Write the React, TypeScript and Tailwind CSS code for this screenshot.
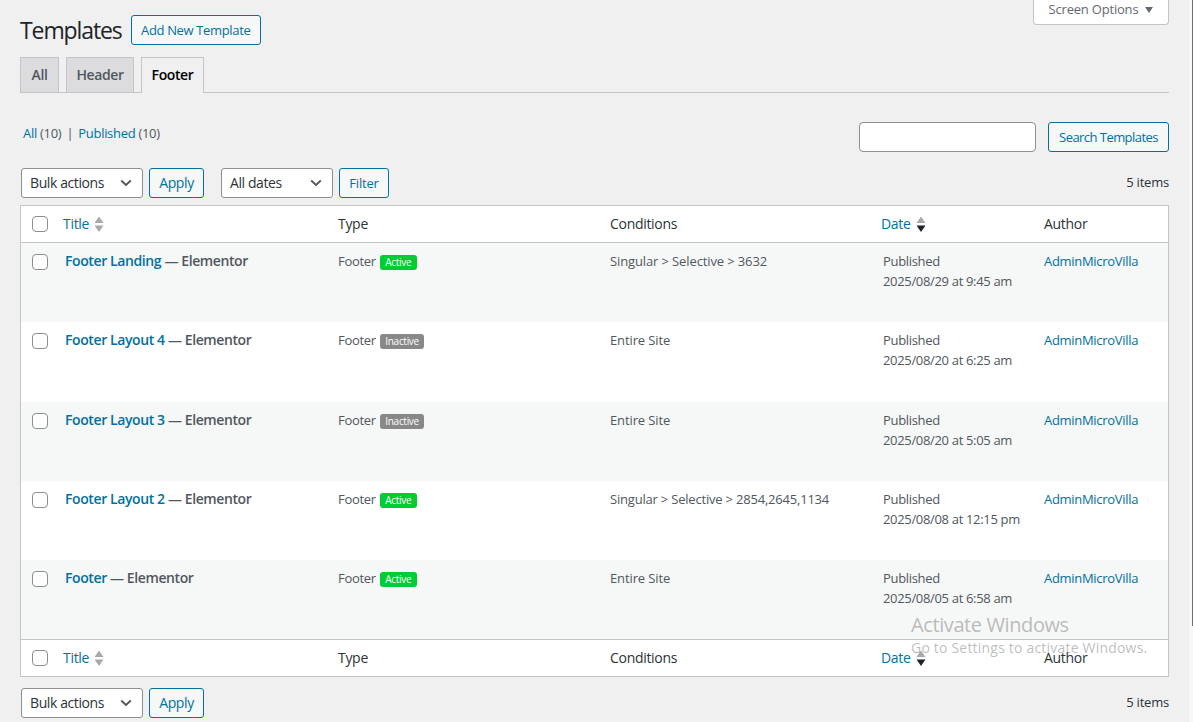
const font = "font-['Open_Sans','Noto_Sans',sans-serif]";

function Sort({ active }: { active?: boolean }) {
  return (
    <svg width="10" height="17" viewBox="0 0 10 17" className="shrink-0">
      <path d="M5 0.5 L9.5 7 H0.5 Z" fill="#a7aaad" />
      <path d="M5 16 L9.5 9.5 H0.5 Z" fill={active ? "#1d2327" : "#a7aaad"} />
    </svg>
  );
}

function Check() {
  return <span className="block w-4 h-4 rounded-[4px] border border-[#8c8f94] bg-white" />;
}

function Chevron() {
  return (
    <svg width="12" height="8" viewBox="0 0 12 8" className="shrink-0">
      <path d="M1.2 1.5 L6 6 L10.8 1.5" fill="none" stroke="#50575e" strokeWidth="1.8" />
    </svg>
  );
}

function Select({ label, w }: { label: string; w: string }) {
  return (
    <div className={`${w} h-[30px] flex items-center justify-between pl-2 pr-2.5 bg-white border border-[#8c8f94] rounded-[3px] text-[14px] tracking-[-0.4px] text-[#2c3338]`}>
      <span className="-mt-px">{label}</span>
      <Chevron />
    </div>
  );
}

function Btn({ label, className = "" }: { label: string; className?: string }) {
  return (
    <div className={`h-[30px] flex items-center justify-center border border-[#0071a1] rounded-[3px] bg-[#f6f7f7] text-[#0071a1] ${className}`}>
      {label}
    </div>
  );
}

const COLS = "grid grid-cols-[317px_272px_271px_163px_1fr]";

function Head() {
  return (
    <div className={`${COLS} h-[36px] items-center bg-white text-[14px] tracking-[-0.3px] text-[#2c3338]`}>
      <div className="flex items-center">
        <span className="w-[42px] pl-[11px]"><Check /></span>
        <span className="-mt-px text-[#0071a1] mr-[5px]">Title</span>
        <Sort />
      </div>
      <span className="-mt-px">Type</span>
      <span className="-mt-px">Conditions</span>
      <div className="flex items-center">
        <span className="-mt-px text-[#0071a1] mr-[5px]">Date</span>
        <Sort active />
      </div>
      <span className="-mt-px">Author</span>
    </div>
  );
}

const rows = [
  { name: "Footer Landing", active: true, cond: "Singular > Selective > 3632", date: "2025/08/29 at 9:45 am", h: "h-[79px]" },
  { name: "Footer Layout 4", active: false, cond: "Entire Site", date: "2025/08/20 at 6:25 am", h: "h-[80px]" },
  { name: "Footer Layout 3", active: false, cond: "Entire Site", date: "2025/08/20 at 5:05 am", h: "h-[79px]" },
  { name: "Footer Layout 2", active: true, cond: "Singular > Selective > 2854,2645,1134", date: "2025/08/08 at 12:15 pm", h: "h-[79px]" },
  { name: "Footer", active: true, cond: "Entire Site", date: "2025/08/05 at 6:58 am", h: "h-[79px]" },
];

export default function App() {
  return (
    <div className={`relative w-[1193px] h-[722px] overflow-hidden bg-[#f0f0f1] text-[13px] text-[#50575e] ${font}`}>
      <div className="absolute right-0 top-0 w-[4px] h-full bg-[#f7f7f7]" />
      <div className="absolute right-0 top-0 w-[1.5px] h-[626px] bg-[#6e6e6e]" />
      <div className="absolute left-[1033px] top-0 w-[136px] h-[25px] bg-white border border-t-0 border-[#c3c4c7] rounded-b-[4px] flex items-center justify-center gap-[7px] text-[13px] tracking-[-0.2px] text-[#646970]">
        <span className="-mt-[5px]">Screen Options</span>
        <span className="-mt-[4px] w-0 h-0 border-x-[4.5px] border-x-transparent border-t-[6px] border-t-[#646970]" />
      </div>

      <div className="pl-5 pr-6 pt-[15px]">
        <div className="flex items-center gap-[9px] h-[30px]">
          <h1 className="text-[23px] tracking-[-1.1px] text-[#1d2327] font-normal">Templates</h1>
          <Btn label="Add New Template" className="w-[130px] text-[13px] tracking-[-0.35px] pt-px" />
        </div>

        <div className="flex items-end gap-[7px] h-[36px] mt-[12px] border-b border-[#c3c4c7]">
          <div className="h-[35px] w-[39px] flex items-center justify-center pb-[2px] bg-[#dcdcde] border border-[#c3c4c7] border-b-0 text-[14px] font-semibold tracking-[-0.4px] text-[#50575e]">All</div>
          <div className="h-[35px] w-[68px] flex items-center justify-center pb-[2px] bg-[#dcdcde] border border-[#c3c4c7] border-b-0 text-[14px] font-semibold tracking-[-0.4px] text-[#50575e]">Header</div>
          <div className="h-[36px] -mb-px w-[63px] flex items-center justify-center pb-[2px] bg-[#f0f0f1] border border-[#c3c4c7] border-b-0 text-[14px] font-semibold tracking-[-0.4px] text-[#000]">Footer</div>
        </div>

        <div className="flex justify-between items-start h-[30px] mt-[29px]">
          <div className="pl-[3px] mt-[2px] text-[13px] tracking-[-0.3px] text-[#50575e]">
            <span className="text-[#0071a1]">All</span> (10) <span className="mx-[2px]">|</span> <span className="text-[#0071a1]">Published</span> (10)
          </div>
          <div className="flex gap-3">
            <div className="w-[177px] h-[30px] bg-white border border-[#8c8f94] rounded-[4px]" />
            <Btn label="Search Templates" className="w-[121px] text-[13px] tracking-[-0.55px] pt-px" />
          </div>
        </div>

        <div className="flex items-center h-[30px] mt-[16px] pl-px">
          <Select label="Bulk actions" w="w-[122px]" />
          <Btn label="Apply" className="w-[55px] ml-[6px] text-[14px] tracking-[-0.4px] pb-[2px]" />
          <Select label="All dates" w="w-[112px] ml-[17px]" />
          <Btn label="Filter" className="w-[50px] ml-[6px] text-[13px] tracking-[-0.2px] pt-px" />
          <span className="ml-auto text-[13px] tracking-[-0.2px] text-[#2c3338]">5 items</span>
        </div>

        <div className="mt-[7px] border border-[#c3c4c7] bg-white">
          <div className="border-b border-[#c3c4c7]"><Head /></div>
          {rows.map((r, i) => (
            <div key={r.name} className={`${COLS} ${r.h} pt-[9px] ${i % 2 === 0 ? "bg-[#f6f7f7]" : "bg-white"}`}>
              <div className="flex">
                <span className="w-[44px] pl-[11px] pt-[2px]"><Check /></span>
                <span className="-mt-[2px] text-[14px] font-semibold tracking-[-0.4px]"><span className="text-[#0071a1]">{r.name}</span> — Elementor</span>
              </div>
              <div className="flex items-start gap-[4px] tracking-[-0.3px]">
                <span>Footer</span>
                <span className={`mt-[3px] h-[15px] px-[5.5px] rounded-[3px] text-[10px] tracking-[-0.3px] leading-[15px] text-white ${r.active ? "bg-[#00cc33]" : "bg-[#888888]"}`}>{r.active ? "Active" : "Inactive"}</span>
              </div>
              <span className={r.cond.length > 30 ? "tracking-[-0.2px]" : "tracking-[-0.12px]"}>{r.cond}</span>
              <div className="leading-[19.5px] pl-[2px] tracking-[-0.33px]">Published<br />{r.date}</div>
              <span className="text-[#0071a1] tracking-[-0.3px]">AdminMicroVilla</span>
            </div>
          ))}
          <div className="border-t border-[#c3c4c7]"><Head /></div>
        </div>

        <div className="flex items-center h-[30px] mt-[11px] pl-px">
          <Select label="Bulk actions" w="w-[122px]" />
          <Btn label="Apply" className="w-[55px] ml-[6px] text-[14px] tracking-[-0.4px] pb-[2px]" />
          <span className="ml-auto text-[13px] tracking-[-0.2px] text-[#2c3338]">5 items</span>
        </div>
      </div>

      <div className="absolute left-[911px] top-[612px] pointer-events-none text-[#7d7d7d]/50">
        <div className="text-[20px] leading-[26px] tracking-[-0.4px]">Activate Windows</div>
        <div className="text-[14px] leading-[20px] tracking-[0.2px]">Go to Settings to activate Windows.</div>
      </div>
    </div>
  );
}
